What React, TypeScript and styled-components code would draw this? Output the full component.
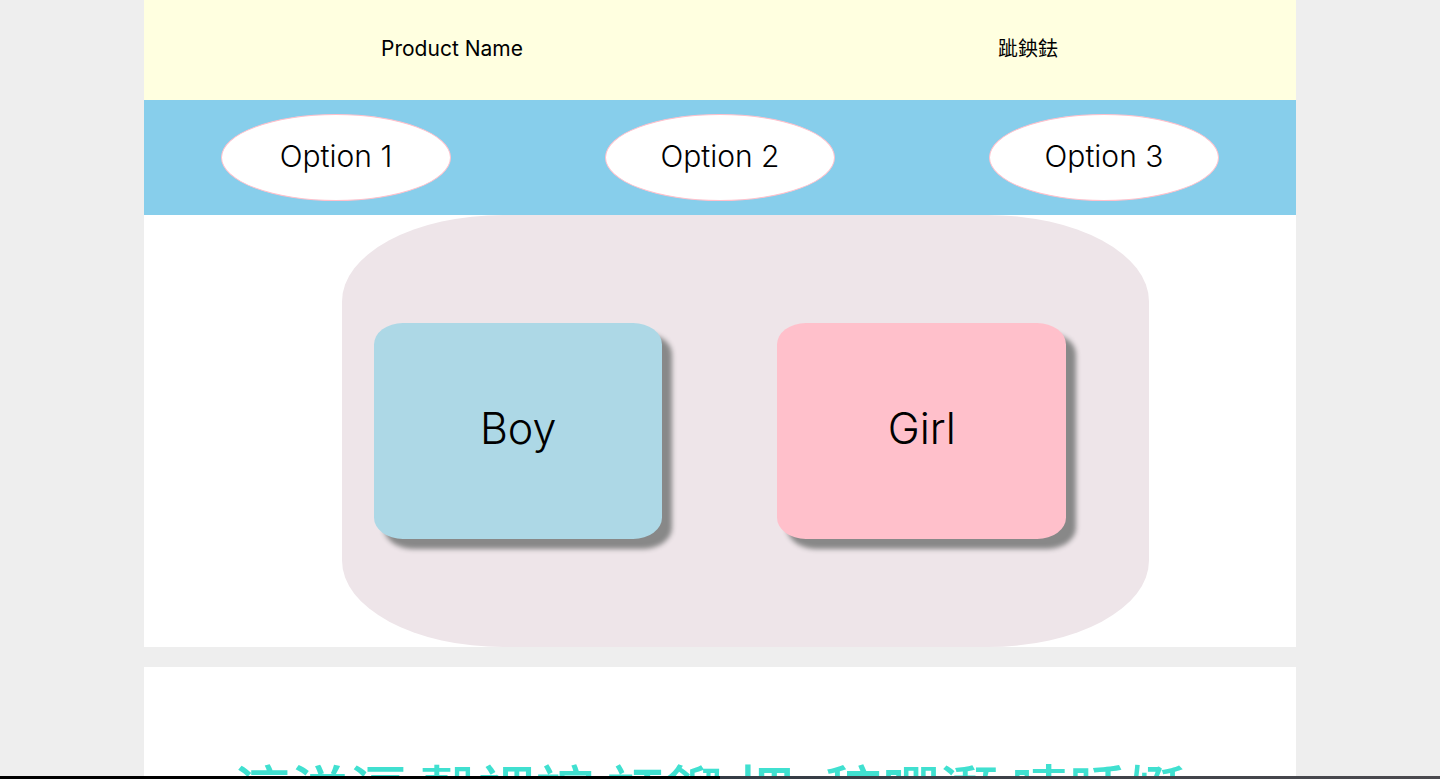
import React from "react";
import styled, { createGlobalStyle } from "styled-components";

const GlobalStyle = createGlobalStyle`
  * { box-sizing: border-box; }
  body {
    margin: 0;
    background: #eeeeee;
    color: #000;
    font-family: Inter, "Noto Sans CJK TC", sans-serif;
    font-weight: 300;
  }
  html, body, #root { height: 100%; }
`;

const Screen = styled.div`
  height: 100vh;
  overflow: hidden;
`;

const Page = styled.div`
  width: 80%;
  margin: 0 auto;
`;

const Header = styled.header`
  display: grid;
  grid-template-columns: 1fr 1fr;
  height: 100px;
  background: #ffffe0;
`;

const HeaderCell = styled.div<{ $native?: boolean }>`
  display: flex;
  align-items: center;
  justify-content: center;
  padding: 0 0 2px 40px;
  font-size: ${(p) => (p.$native ? "20px" : "21px")};
  font-weight: 400;
  line-height: 24px;
`;

const Nav = styled.nav`
  display: grid;
  grid-template-columns: repeat(3, 1fr);
  justify-items: center;
  padding: 14px 0;
  background: #87ceeb;
`;

const Option = styled.button`
  width: 60%;
  height: 87px;
  padding: 0 0 4px;
  border: 1px solid #ffc0cb;
  border-radius: 50%;
  background: #fff;
  color: inherit;
  font: inherit;
  font-size: 30px;
`;

const Hero = styled.main`
  background: #fff;
`;

const Panel = styled.section`
  display: grid;
  grid-template-columns: 1fr 1fr;
  width: calc(70% + 1px);
  margin-left: calc(15% + 25px);
  padding: 108px 0;
  border-radius: 20%;
  background: #eee5e9;
`;

const Slot = styled.div`
  padding: 0 83px 0 32px;
`;

const Card = styled.button<{ $color: string }>`
  display: block;
  width: 100%;
  height: 216px;
  padding: 0 0 6px;
  border: 0;
  border-radius: 10%;
  background: ${(p) => p.$color};
  box-shadow: 10px 10px 5px #888888;
  color: inherit;
  font: inherit;
  font-size: 43px;
`;

const Article = styled.section`
  margin-top: 20px;
  padding: 86px 0 40px;
  background: #fff;
`;

const Title = styled.h1`
  margin: 0;
  padding-right: 22px;
  color: #40e0d0;
  font-family: "Noto Sans CJK TC", sans-serif;
  font-size: 58px;
  font-weight: 500;
  line-height: 72px;
  text-align: center;
  white-space: nowrap;
`;

const Dock = styled.div`
  position: fixed;
  right: 0;
  bottom: 0;
  left: 0;
  height: 3px;
  background: linear-gradient(90deg, #000 50%, #343b44 50%, #4a494e);
`;

const options = ["Option 1", "Option 2", "Option 3"];
const choices = [
  { label: "Boy", color: "#add8e6" },
  { label: "Girl", color: "#ffc0cb" },
];

export default function App() {
  return (
    <Screen>
      <GlobalStyle />
      <Page>
        <Header>
          <HeaderCell>Product Name</HeaderCell>
          <HeaderCell $native lang="zh-Hant">跐鉠鉣</HeaderCell>
        </Header>
        <Nav>
          {options.map((label) => (
            <Option key={label} type="button">{label}</Option>
          ))}
        </Nav>
        <Hero>
          <Panel>
            {choices.map(({ label, color }) => (
              <Slot key={label}>
                <Card type="button" $color={color}>{label}</Card>
              </Slot>
            ))}
          </Panel>
        </Hero>
        <Article>
          <Title lang="zh-Hant">滈溔滆 縠裸諠 訌餾 押, 稡嘽瀩 嗉睡娗</Title>
        </Article>
      </Page>
      <Dock />
    </Screen>
  );
}
